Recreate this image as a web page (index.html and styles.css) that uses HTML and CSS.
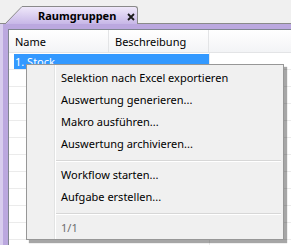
FILE: index.html
```html
<!DOCTYPE html>
<html lang="de">
<head>
    <meta charset="UTF-8">
    <title>Raumgruppen</title>
    <link rel="stylesheet" href="styles.css">
</head>
<body>
    <div class="tabstrip">
        <svg class="tab-ear" width="17" height="18" viewBox="0 0 17 18">
            <defs>
                <linearGradient id="earfill" x1="0" y1="0" x2="0" y2="1">
                    <stop offset="0" stop-color="#efe8fa"/>
                    <stop offset="1" stop-color="#c7b7e7"/>
                </linearGradient>
            </defs>
            <polygon points="0,18 17,0.5 17,18" fill="url(#earfill)"/>
            <line x1="0" y1="18" x2="17" y2="0.5" stroke="#8a8a8a" stroke-width="1"/>
        </svg>
        <div class="tab">
            <span class="tab-title">Raumgruppen</span>
            <svg class="tab-close" width="8" height="8" viewBox="0 0 8 8">
                <path d="M1 1 L7 7 M7 1 L1 7" stroke="#1a1a1a" stroke-width="1.8"/>
            </svg>
        </div>
    </div>
    <div class="frame">
        <div class="grid">
            <div class="grid-head">
                <div class="col col-name">Name</div>
                <div class="col col-desc">Beschreibung</div>
                <div class="col col-rest"></div>
            </div>
            <div class="row"><span class="sel">1. Stock</span></div>
            <div class="row"></div>
            <div class="row"></div>
            <div class="row"></div>
            <div class="row"></div>
            <div class="row"></div>
            <div class="row"></div>
            <div class="row"></div>
            <div class="row"></div>
            <div class="row"></div>
            <div class="row"></div>
            <div class="row"></div>
        </div>
    </div>

    <div class="menu">
        <div class="menu-item">Selektion nach Excel exportieren</div>
        <div class="menu-item">Auswertung generieren...</div>
        <div class="menu-item">Makro ausführen...</div>
        <div class="menu-item">Auswertung archivieren...</div>
        <div class="menu-sep"></div>
        <div class="menu-item">Workflow starten...</div>
        <div class="menu-item">Aufgabe erstellen...</div>
        <div class="menu-sep"></div>
        <div class="menu-item disabled">1/1</div>
    </div>
</body>
</html>
```

FILE: styles.css
```css
body {
    margin: 0;
    width: 291px;
    height: 245px;
    overflow: hidden;
    background-color: #f0f0f0;
    font-family: "Noto Sans", sans-serif;
    font-size: 11px;
    color: #000;
}
.tabstrip {
    display: flex;
    align-items: flex-end;
    height: 24px;
    padding-left: 5px;
    margin-bottom: -1px;
    position: relative;
    z-index: 1;
}
.tab-ear {
    display: block;
}
.tab {
    display: flex;
    align-items: center;
    width: 115px;
    height: 17px;
    background: linear-gradient(#efe8fa, #c7b7e7);
    border-top: 1px solid #8a8a8a;
    border-right: 1px solid #8a8a8a;
    border-top-right-radius: 3px;
}
.tab-title {
    font-weight: bold;
    margin-left: 16px;
    font-size: 11px;
}
.tab-close {
    display: block;
    margin-left: 11px;
    margin-top: 2px;
}
.frame {
    border-top: 1px solid #8a8a8a;
    padding: 5px 0 0 8px;
    box-sizing: border-box;
    height: 222px;
    background: linear-gradient(90deg, #d8cdee 0, #d8cdee 3px, #bba8df 3px);
}
.grid {
    background: #fff;
    border-top: 1px solid #7f8590;
    border-left: 1px solid #7f8590;
    height: 100%;
    overflow: hidden;
}
.grid-head {
    display: flex;
    height: 22px;
    background: linear-gradient(#ffffff, #f3f4f6);
    border-bottom: 1px solid #e3e4e6;
}
.col {
    display: flex;
    align-items: center;
    padding-left: 6px;
    border-right: 1px solid #e3e4e6;
    box-sizing: border-box;
}
.col-name {
    width: 100px;
}
.col-desc {
    width: 100px;
}
.col-rest {
    flex: 1;
    border-right: none;
}
.row {
    display: flex;
    align-items: center;
    height: 16px;
    border-bottom: 1px solid #ebebeb;
    background: linear-gradient(90deg, transparent 200px, #ebebeb 200px, #ebebeb 201px, transparent 201px);
}
.sel {
    margin-left: 5px;
    width: 194px;
    height: 15px;
    line-height: 15px;
    padding-left: 1px;
    background-color: #3399ff;
    color: #fff;
}
.menu {
    position: absolute;
    left: 26px;
    top: 64px;
    width: 256px;
    padding: 2px 0 0;
    box-sizing: content-box;
    height: 172px;
    background: linear-gradient(90deg, #f0f0f0 27px, #e2e3e3 27px, #e2e3e3 28px, #fff 28px, #fff 29px, #f0f0f0 29px);
    border: 1px solid #979797;
    box-shadow: 3px 3px 1px rgba(0, 0, 0, 0.35);
}
.menu-item {
    height: 22px;
    line-height: 22px;
    padding-left: 34px;
    white-space: nowrap;
}
.menu-item.disabled {
    color: #6d6d6d;
}
.menu-sep {
    height: 1px;
    margin: 5px 2px 2px 29px;
    background: #d7d7d7;
    border-bottom: 1px solid #fff;
}
```
